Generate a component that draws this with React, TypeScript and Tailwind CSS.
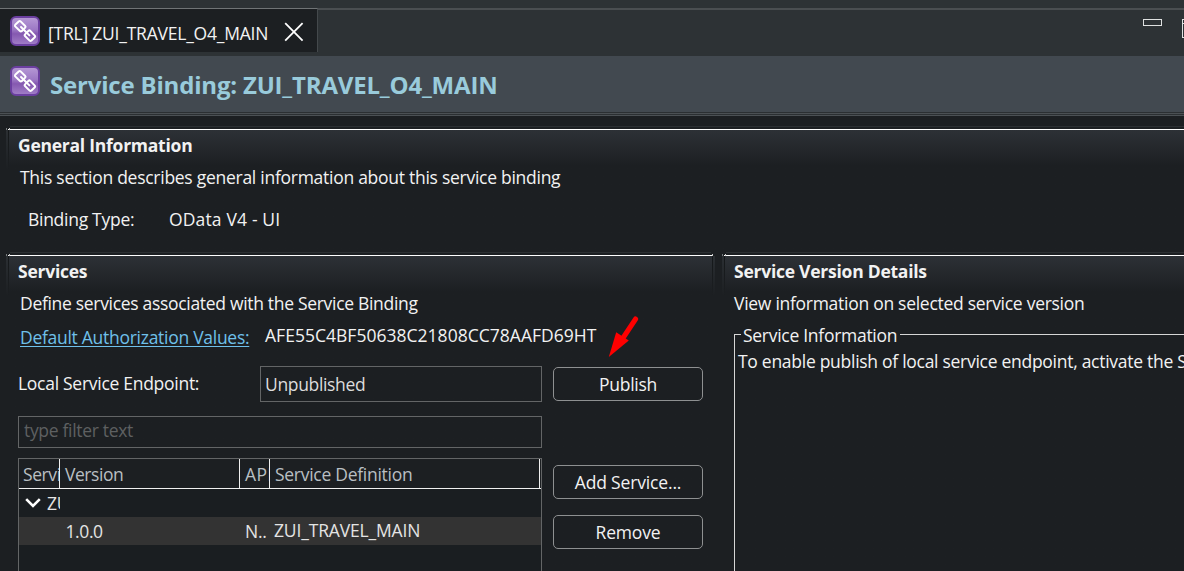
import type { ReactNode } from 'react';

function BindingIcon({ id }: { id: string }) {
  return (
    <svg width="30" height="30" viewBox="0 0 30 30" className="block shrink-0">
      <defs>
        <linearGradient id={id} x1="0" y1="0" x2="0" y2="1">
          <stop offset="0" stopColor="#b79ad6" />
          <stop offset="0.45" stopColor="#9c78c4" />
          <stop offset="0.6" stopColor="#8558b0" />
          <stop offset="1" stopColor="#a280c8" />
        </linearGradient>
      </defs>
      <rect x="1" y="1" width="28" height="28" rx="5" fill={`url(#${id})`} stroke="#6b3fa0" strokeWidth="2" />
      <g fill="none" stroke="#fff" strokeWidth="2" strokeLinejoin="round" strokeLinecap="round">
        <path d="M5.2 8.8 9 5.2Q9.8 4.6 10.6 5.4L15.2 10Q16 10.8 15.2 11.6L11.6 15.2Q10.8 15.8 10 15L5.2 10.4Q4.6 9.6 5.2 8.8Z" />
        <path d="M15 18.4 18.6 14.8Q19.4 14 20.2 14.8L24.8 19.6Q25.6 20.4 24.8 21.2L21.2 24.8Q20.4 25.4 19.6 24.6L15 20Q14.2 19.2 15 18.4Z" />
        <path d="M11 11 19.4 19.4" />
      </g>
    </svg>
  );
}

function Section({ title, closed, children, className }: { title: string; closed?: boolean; children: ReactNode; className: string }) {
  return (
    <section className={`flex flex-col ${className}`}>
      <div className={`ml-1 h-px shrink-0 bg-[#2b2f32] ${closed ? 'mr-1' : ''}`} />
      <div className="flex h-[3px] shrink-0 items-end">
        <div className="h-0.5 w-px bg-[#777b7d]" />
        <div className="ml-px h-px w-px bg-white" />
        <div className="h-0.5 w-px bg-[#c8caca]" />
        <div className="h-px flex-1 bg-white" />
        {closed && <div className="mr-0.5 h-0.5 w-px bg-[#c8caca]" />}
      </div>
      <div className="flex min-h-0 flex-1">
        <div className="h-10 w-0.5 shrink-0 bg-linear-to-b from-[#2b2f33] to-[#1c1f22]" />
        <div className="h-10 w-px shrink-0 bg-linear-to-b from-[#15181a] to-[#1c1f22]" />
        <div className="min-w-0 flex-1 bg-linear-to-b from-[#2d3136] to-[#1c1f22] to-[36px] pt-[3px]">
          <h2 className="pl-[9px] font-bold tracking-[-0.25px]">{title}</h2>
          {children}
        </div>
        {closed && <div className="h-10 w-px shrink-0 bg-linear-to-b from-[#15181a] to-[#1c1f22]" />}
        {closed && <div className="h-10 w-0.5 shrink-0 bg-linear-to-b from-[#2b2f33] to-[#1c1f22]" />}
      </div>
    </section>
  );
}

function Button({ children, className }: { children: ReactNode; className: string }) {
  return (
    <button className={`block h-[34px] w-[150px] rounded-[5px] border border-[#8e9091] pt-px text-center leading-[31px] ${className}`}>
      {children}
    </button>
  );
}

export default function App() {
  return (
    <div className="flex h-[571px] w-[1184px] flex-col overflow-hidden bg-[#1c1f22] font-['Open_Sans','Noto_Sans',sans-serif] text-[17.5px] leading-6 tracking-[-0.28px] whitespace-nowrap text-[#f2f2f2]">
      <div className="flex h-14 shrink-0 items-start bg-[#2d3235] pt-2">
        <div className="flex h-11 w-[318px] shrink-0 items-start border-t border-r border-t-[#707476] border-r-[#44494c] bg-[#1c1f22] pl-2.5">
          <div className="pt-[7px]"><BindingIcon id="tabIcon" /></div>
          <span className="w-[244px] shrink-0 pt-3 pl-2 tracking-[-0.22px]">[TRL] ZUI_TRAVEL_O4_MAIN</span>
          <svg width="20" height="20" viewBox="0 0 20 20" className="mt-[13px] shrink-0">
            <path d="M1.2 1.2 18.6 18.6M18.6 1.2 1.2 18.6" stroke="#fff" strokeWidth="1.8" />
          </svg>
        </div>
        <div className="flex h-11 flex-1 justify-end overflow-hidden border-t-2 border-[#4a4e51] pt-[9px]">
          <div className="h-[7px] w-[19px] shrink-0 border border-[#dfe1e1]" />
          <div className="ml-5 h-[19px] w-0.5 shrink-0 border-y border-l border-[#dfe1e1] pt-[3px]">
            <div className="h-px bg-[#dfe1e1]" />
          </div>
        </div>
      </div>

      <header className="flex h-14 shrink-0 bg-[#424950] pt-2.5 pl-2.5">
        <BindingIcon id="headerIcon" />
        <h1 className="pt-[3px] pl-2.5 text-[24px] leading-8 font-bold tracking-[-0.19px] text-[#99cbdb]">
          Service Binding: ZUI_TRAVEL_O4_MAIN
        </h1>
      </header>
      <div className="h-1 shrink-0 bg-[#2b2f32] pt-px">
        <div className="h-[3px] border-y border-[#4b5054]" />
      </div>

      <main className="flex min-h-0 flex-1 flex-col pt-2.5 pl-1.5">
        <Section title="General Information" className="h-[126px] shrink-0">
          <p className="mt-2 pl-[11px] tracking-[-0.27px]">This section describes general information about this service binding</p>
          <div className="mt-[18px] flex pl-[19px]">
            <span className="w-[141px]">Binding Type:</span>
            <span className="tracking-[0.15px]">OData V4 - UI</span>
          </div>
        </Section>

        <div className="flex min-h-0 flex-1">
          <Section title="Services" closed className="w-[709px] shrink-0">
            <p className="mt-2 pl-[11px] tracking-[-0.31px]">Define services associated with the Service Binding</p>
            <div className="mt-2 flex h-[26px] pl-[11px]">
              <a className="mt-0.5 w-[245px] text-[#6fc0ea]">
                <span className="underline decoration-1 underline-offset-2 [text-decoration-skip-ink:none]">Default Authorization Values:</span>
              </a>
              <span className="tracking-[0.02px]">AFE55C4BF50638C21808CC78AAFD69HT</span>
              <svg width="32" height="44" viewBox="0 0 32 44" className="-mt-2.5 -mb-2.5 ml-[11.5px] shrink-0">
                <path d="M27.6 6 15 25" stroke="#fe0000" strokeWidth="5" strokeLinecap="round" />
                <path d="M0.8 44 8.2 19.2 20.8 27.6Z" fill="#fe0000" />
              </svg>
            </div>
            <div className="mt-[15px] flex pl-[9px]">
              <span className="w-[242px] pt-[7px]">Local Service Endpoint:</span>
              <div className="mt-0.5 h-9 w-[282px] border border-[#636566] pt-[5px] pl-1 tracking-[-0.34px] text-[#dcdcdc]">Unpublished</div>
              <Button className="mt-[3px] ml-[11px]">Publish</Button>
            </div>
            <div className="mt-3.5 flex pl-[9px]">
              <div className="w-[524px]">
                <div className="h-8 border border-[#636566] pt-px pl-[5px] tracking-[-0.32px] text-[#5e6061]">type filter text</div>
                <div className="mt-2.5 h-[120px] border border-[#636566] bg-[#1a1e21]">
                  <div className="flex h-[30px] border-b border-[#f0f0f0] bg-[#1c1f22] pr-px leading-[31px] text-[#b9bfc3]">
                    <span className="w-[41px] overflow-hidden border-r border-[#f0f0f0] pl-1 tracking-[-0.4px]">Service</span>
                    <span className="w-[180px] border-r border-[#f0f0f0] pl-[5px] tracking-[-0.45px]">Version</span>
                    <span className="w-[30px] overflow-hidden border-r border-[#f0f0f0] pl-[5px] tracking-[0.5px]">API</span>
                    <span className="flex-1 border-r border-[#f0f0f0] pl-[5px]">Service Definition</span>
                  </div>
                  <div className="flex h-7 leading-[29px] text-[#e4e4e4]">
                    <div className="flex w-[41px] overflow-hidden">
                      <svg width="16" height="10" viewBox="0 0 16 10" className="mt-[9px] ml-1.5 shrink-0">
                        <path d="M1.2 1.2 8 8 14.8 1.2" fill="none" stroke="#fff" strokeWidth="2.6" />
                      </svg>
                      <span className="pl-1.5">ZUI_TRAVEL</span>
                    </div>
                  </div>
                  <div className="flex h-7 bg-[#333333] leading-[29px] text-[#e4e4e4]">
                    <span className="w-[226px] pl-[46.5px] tracking-[-0.4px]">1.0.0</span>
                    <span className="w-[29px]">N..</span>
                    <span className="leading-[27px] tracking-[-0.16px]">ZUI_TRAVEL_MAIN</span>
                  </div>
                </div>
              </div>
              <div className="pt-[49px] pl-[11px]">
                <Button className="tracking-[-0.16px]">Add Service...</Button>
                <Button className="mt-4 tracking-[-0.15px]">Remove</Button>
              </div>
            </div>
          </Section>

          <Section title="Service Version Details" className="ml-[7px] min-w-0 flex-1">
            <p className="mt-2 pl-[9px]">View information on selected service version</p>
            <div className="mt-2 ml-[9px] flex h-6">
              <div className="mt-[11px] h-[13px] w-[7px] border-t border-l border-[#d6d6d6]" />
              <span className="px-0.5">Service Information</span>
              <div className="mt-[11px] ml-px h-px flex-1 bg-[#d6d6d6]" />
            </div>
            <div className="ml-[9px] h-[240px] border-l border-[#d6d6d6] pt-0.5 pl-[3px]">
              To enable publish of local service endpoint, activate the Service
            </div>
          </Section>
        </div>
      </main>
    </div>
  );
}
